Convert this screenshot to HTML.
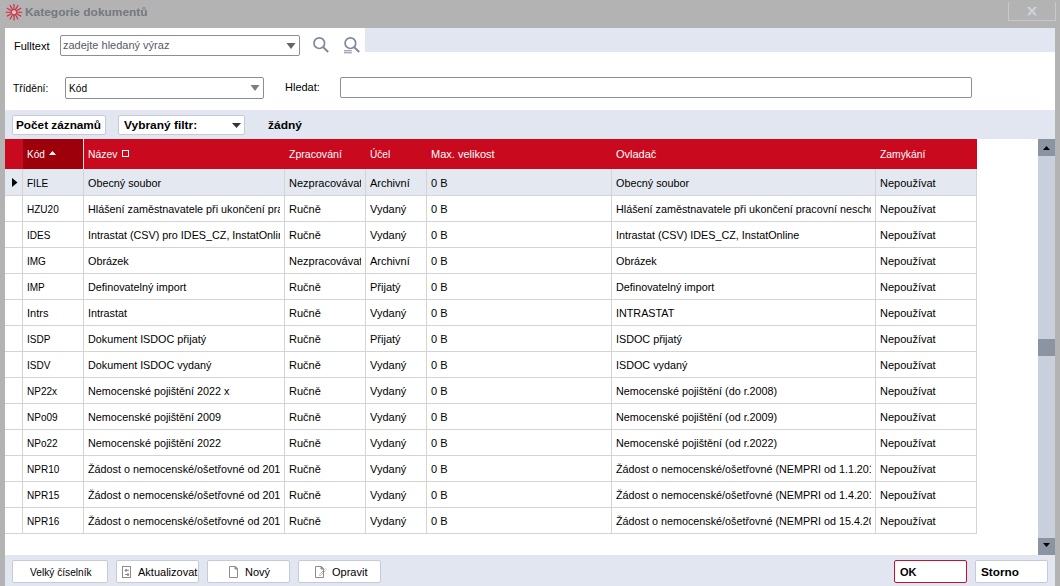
<!DOCTYPE html><html><head><meta charset="utf-8"><style>
*{margin:0;padding:0;box-sizing:border-box}
html,body{width:1060px;height:586px;overflow:hidden;background:#b3b3b3;font-family:"Liberation Sans",sans-serif;font-size:11px;color:#000}
.a{position:absolute}
.t{position:absolute;white-space:nowrap;line-height:13px;font-size:11px}
.b{font-weight:bold}
.inp{position:absolute;background:#fff;border:1px solid #8d8d94;border-radius:2px}
.btn{position:absolute;background:#fff;border:1px solid #c5cbd6;border-radius:2px}
.cell{position:absolute;overflow:hidden;white-space:nowrap;line-height:13px}
.gl{position:absolute;background:#d4d4d4}
</style></head><body>
<svg class="a" style="left:4px;top:2px" width="20" height="20" viewBox="0 0 20 20"><circle cx="10" cy="10.2" r="2.6" fill="#c9cdcc" stroke="#d4283c" stroke-width="0.9"/><line x1="13.00" y1="10.20" x2="17.80" y2="10.20" stroke="#d4283c" stroke-width="1.15" stroke-linecap="round"/><line x1="12.60" y1="11.70" x2="16.75" y2="14.10" stroke="#d4283c" stroke-width="1.15" stroke-linecap="round"/><line x1="11.50" y1="12.80" x2="13.90" y2="16.95" stroke="#d4283c" stroke-width="1.15" stroke-linecap="round"/><line x1="10.00" y1="13.20" x2="10.00" y2="18.00" stroke="#d4283c" stroke-width="1.15" stroke-linecap="round"/><line x1="8.50" y1="12.80" x2="6.10" y2="16.95" stroke="#d4283c" stroke-width="1.15" stroke-linecap="round"/><line x1="7.40" y1="11.70" x2="3.25" y2="14.10" stroke="#d4283c" stroke-width="1.15" stroke-linecap="round"/><line x1="7.00" y1="10.20" x2="2.20" y2="10.20" stroke="#d4283c" stroke-width="1.15" stroke-linecap="round"/><line x1="7.40" y1="8.70" x2="3.25" y2="6.30" stroke="#d4283c" stroke-width="1.15" stroke-linecap="round"/><line x1="8.50" y1="7.60" x2="6.10" y2="3.45" stroke="#d4283c" stroke-width="1.15" stroke-linecap="round"/><line x1="10.00" y1="7.20" x2="10.00" y2="2.40" stroke="#d4283c" stroke-width="1.15" stroke-linecap="round"/><line x1="11.50" y1="7.60" x2="13.90" y2="3.45" stroke="#d4283c" stroke-width="1.15" stroke-linecap="round"/><line x1="12.60" y1="8.70" x2="16.75" y2="6.30" stroke="#d4283c" stroke-width="1.15" stroke-linecap="round"/></svg>
<div class="t b" style="left:25px;top:6px;color:#737881;transform-origin:0 0;transform:scaleX(1.084)">Kategorie dokumentů</div>
<div class="a" style="left:1008px;top:2px;width:48px;height:19px;border:1px solid #c4c9d2;border-top:none"></div>
<svg class="a" style="left:1025px;top:6px" width="14" height="10" viewBox="0 0 14 10"><path d="M1.8 1 H5 L7 3.6 L9 1 H12.2 L8.7 5.1 L12.2 9.2 H9 L7 6.6 L5 9.2 H1.8 L5.3 5.1 Z" fill="#cbd0d9"/></svg>
<div class="a" style="left:5px;top:28px;width:1050px;height:558px;background:#fff"></div>
<div class="a" style="left:365px;top:28px;width:690px;height:24px;background:#e2e6f0"></div>
<div class="t" style="left:14px;top:40px">Fulltext</div>
<div class="inp" style="left:60px;top:35px;width:240px;height:21px"></div>
<div class="t" style="left:63px;top:39px;color:#555a66">zadejte hledaný výraz</div>
<svg class="a" style="left:286px;top:43px" width="10" height="6"><path d="M0.5 0 L9.5 0 L5 6 Z" fill="#646464"/></svg>
<svg class="a" style="left:310px;top:34px" width="22" height="22" viewBox="0 0 22 22"><circle cx="9.3" cy="9.2" r="5.3" fill="none" stroke="#7f8898" stroke-width="1.7"/><path d="M13 13 L18.2 18" stroke="#7f8898" stroke-width="1.9"/></svg>
<svg class="a" style="left:341px;top:34px" width="22" height="22" viewBox="0 0 22 22"><circle cx="9.4" cy="9.2" r="5.3" fill="none" stroke="#7f8898" stroke-width="1.7"/><path d="M13 13 L18.2 18" stroke="#7f8898" stroke-width="1.9"/><path d="M3 16.8 H10.8 M3 18.8 H10.8" stroke="#7f8898" stroke-width="1"/></svg>
<div class="t" style="left:13px;top:82px;transform-origin:0 0;transform:scaleX(0.93)">Třídění:</div>
<div class="inp" style="left:65px;top:77px;width:199px;height:22px"></div>
<div class="t" style="left:69px;top:82px;transform-origin:0 0;transform:scaleX(0.92)">Kód</div>
<svg class="a" style="left:250px;top:85px" width="10" height="6"><path d="M0.5 0 L9.5 0 L5 6 Z" fill="#7c7f85"/></svg>
<div class="t" style="left:285px;top:81px">Hledat:</div>
<div class="inp" style="left:340px;top:77px;width:632px;height:21px"></div>
<div class="a" style="left:5px;top:110px;width:1050px;height:29px;background:#e2e6f0"></div>
<div class="btn" style="left:12px;top:115px;width:94px;height:20px"></div>
<div class="t b" style="left:16px;top:119px;transform-origin:0 0;transform:scaleX(1.07)">Počet záznamů</div>
<div class="btn" style="left:118px;top:115px;width:127px;height:20px"></div>
<div class="t b" style="left:124px;top:119px;transform-origin:0 0;transform:scaleX(1.084)">Vybraný filtr:</div>
<svg class="a" style="left:232px;top:123px" width="9" height="5"><path d="M0 0 L9 0 L4.5 5 Z" fill="#33353a"/></svg>
<div class="t b" style="left:268px;top:119px;transform-origin:0 0;transform:scaleX(1.09)">žádný</div>
<div class="a" style="left:5px;top:139px;width:972px;height:30px;background:#c8091e"></div>
<div class="a" style="left:23px;top:139px;width:60px;height:30px;background:#9d000b"></div>
<div class="a" style="left:83px;top:139px;width:1px;height:30px;background:#f4dfe1"></div>
<div class="t" style="left:27px;top:148px;color:#fff;transform-origin:0 0;transform:scaleX(0.91)">Kód</div>
<div class="t" style="left:88px;top:148px;color:#fff;transform-origin:0 0;transform:scaleX(0.94)">Název</div>
<div class="t" style="left:289px;top:148px;color:#fff;transform-origin:0 0;transform:scaleX(0.96)">Zpracování</div>
<div class="t" style="left:370px;top:148px;color:#fff;transform-origin:0 0;transform:scaleX(0.92)">Účel</div>
<div class="t" style="left:431px;top:148px;color:#fff;transform-origin:0 0;transform:scaleX(1.0)">Max. velikost</div>
<div class="t" style="left:616px;top:148px;color:#fff;transform-origin:0 0;transform:scaleX(1.0)">Ovladač</div>
<div class="t" style="left:880px;top:148px;color:#fff;transform-origin:0 0;transform:scaleX(0.94)">Zamykání</div>
<svg class="a" style="left:49px;top:151px" width="7" height="4"><path d="M0 4 L3.5 0 L7 4 Z" fill="#fff"/></svg>
<div class="a" style="left:122px;top:150px;width:7px;height:7px;border:1.2px solid #fff"></div>
<div class="a" style="left:5px;top:169px;width:971px;height:26px;background:#e4e8f1"></div>
<div class="gl" style="left:5px;top:195px;width:972px;height:1px"></div>
<div class="cell" style="left:27px;top:177px;width:52px"><span style="display:inline-block;transform-origin:0 0;transform:scaleX(0.91)">FILE</span></div>
<div class="cell" style="left:88px;top:177px;width:192px"><span style="display:inline-block;transform-origin:0 0;transform:scaleX(0.98)">Obecný soubor</span></div>
<div class="cell" style="left:289px;top:177px;width:72px">Nezpracovávat</div>
<div class="cell" style="left:370px;top:177px;width:52px">Archivní</div>
<div class="cell" style="left:431px;top:177px;width:176px">0 B</div>
<div class="cell" style="left:616px;top:177px;width:255px"><span style="display:inline-block;transform-origin:0 0;transform:scaleX(0.98)">Obecný soubor</span></div>
<div class="cell" style="left:880px;top:177px;width:92px">Nepoužívat</div>
<div class="gl" style="left:5px;top:221px;width:972px;height:1px"></div>
<div class="cell" style="left:27px;top:203px;width:52px"><span style="display:inline-block;transform-origin:0 0;transform:scaleX(0.91)">HZU20</span></div>
<div class="cell" style="left:88px;top:203px;width:192px"><span style="display:inline-block;transform-origin:0 0;transform:scaleX(0.98)">Hlášení zaměstnavatele při ukončení pracovní neschopnosti</span></div>
<div class="cell" style="left:289px;top:203px;width:72px">Ručně</div>
<div class="cell" style="left:370px;top:203px;width:52px">Vydaný</div>
<div class="cell" style="left:431px;top:203px;width:176px">0 B</div>
<div class="cell" style="left:616px;top:203px;width:255px"><span style="display:inline-block;transform-origin:0 0;transform:scaleX(0.98)">Hlášení zaměstnavatele při ukončení pracovní neschopnosti</span></div>
<div class="cell" style="left:880px;top:203px;width:92px">Nepoužívat</div>
<div class="gl" style="left:5px;top:247px;width:972px;height:1px"></div>
<div class="cell" style="left:27px;top:229px;width:52px"><span style="display:inline-block;transform-origin:0 0;transform:scaleX(0.91)">IDES</span></div>
<div class="cell" style="left:88px;top:229px;width:192px"><span style="display:inline-block;transform-origin:0 0;transform:scaleX(0.98)">Intrastat (CSV) pro IDES_CZ, InstatOnline</span></div>
<div class="cell" style="left:289px;top:229px;width:72px">Ručně</div>
<div class="cell" style="left:370px;top:229px;width:52px">Vydaný</div>
<div class="cell" style="left:431px;top:229px;width:176px">0 B</div>
<div class="cell" style="left:616px;top:229px;width:255px"><span style="display:inline-block;transform-origin:0 0;transform:scaleX(0.98)">Intrastat (CSV) IDES_CZ, InstatOnline</span></div>
<div class="cell" style="left:880px;top:229px;width:92px">Nepoužívat</div>
<div class="gl" style="left:5px;top:273px;width:972px;height:1px"></div>
<div class="cell" style="left:27px;top:255px;width:52px"><span style="display:inline-block;transform-origin:0 0;transform:scaleX(0.91)">IMG</span></div>
<div class="cell" style="left:88px;top:255px;width:192px"><span style="display:inline-block;transform-origin:0 0;transform:scaleX(0.98)">Obrázek</span></div>
<div class="cell" style="left:289px;top:255px;width:72px">Nezpracovávat</div>
<div class="cell" style="left:370px;top:255px;width:52px">Archivní</div>
<div class="cell" style="left:431px;top:255px;width:176px">0 B</div>
<div class="cell" style="left:616px;top:255px;width:255px"><span style="display:inline-block;transform-origin:0 0;transform:scaleX(0.98)">Obrázek</span></div>
<div class="cell" style="left:880px;top:255px;width:92px">Nepoužívat</div>
<div class="gl" style="left:5px;top:299px;width:972px;height:1px"></div>
<div class="cell" style="left:27px;top:281px;width:52px"><span style="display:inline-block;transform-origin:0 0;transform:scaleX(0.91)">IMP</span></div>
<div class="cell" style="left:88px;top:281px;width:192px"><span style="display:inline-block;transform-origin:0 0;transform:scaleX(0.98)">Definovatelný import</span></div>
<div class="cell" style="left:289px;top:281px;width:72px">Ručně</div>
<div class="cell" style="left:370px;top:281px;width:52px">Přijatý</div>
<div class="cell" style="left:431px;top:281px;width:176px">0 B</div>
<div class="cell" style="left:616px;top:281px;width:255px"><span style="display:inline-block;transform-origin:0 0;transform:scaleX(0.98)">Definovatelný import</span></div>
<div class="cell" style="left:880px;top:281px;width:92px">Nepoužívat</div>
<div class="gl" style="left:5px;top:325px;width:972px;height:1px"></div>
<div class="cell" style="left:27px;top:307px;width:52px">Intrs</div>
<div class="cell" style="left:88px;top:307px;width:192px"><span style="display:inline-block;transform-origin:0 0;transform:scaleX(0.98)">Intrastat</span></div>
<div class="cell" style="left:289px;top:307px;width:72px">Ručně</div>
<div class="cell" style="left:370px;top:307px;width:52px">Vydaný</div>
<div class="cell" style="left:431px;top:307px;width:176px">0 B</div>
<div class="cell" style="left:616px;top:307px;width:255px"><span style="display:inline-block;transform-origin:0 0;transform:scaleX(0.98)">INTRASTAT</span></div>
<div class="cell" style="left:880px;top:307px;width:92px">Nepoužívat</div>
<div class="gl" style="left:5px;top:351px;width:972px;height:1px"></div>
<div class="cell" style="left:27px;top:333px;width:52px"><span style="display:inline-block;transform-origin:0 0;transform:scaleX(0.91)">ISDP</span></div>
<div class="cell" style="left:88px;top:333px;width:192px"><span style="display:inline-block;transform-origin:0 0;transform:scaleX(0.98)">Dokument ISDOC přijatý</span></div>
<div class="cell" style="left:289px;top:333px;width:72px">Ručně</div>
<div class="cell" style="left:370px;top:333px;width:52px">Přijatý</div>
<div class="cell" style="left:431px;top:333px;width:176px">0 B</div>
<div class="cell" style="left:616px;top:333px;width:255px"><span style="display:inline-block;transform-origin:0 0;transform:scaleX(0.98)">ISDOC přijatý</span></div>
<div class="cell" style="left:880px;top:333px;width:92px">Nepoužívat</div>
<div class="gl" style="left:5px;top:377px;width:972px;height:1px"></div>
<div class="cell" style="left:27px;top:359px;width:52px"><span style="display:inline-block;transform-origin:0 0;transform:scaleX(0.91)">ISDV</span></div>
<div class="cell" style="left:88px;top:359px;width:192px"><span style="display:inline-block;transform-origin:0 0;transform:scaleX(0.98)">Dokument ISDOC vydaný</span></div>
<div class="cell" style="left:289px;top:359px;width:72px">Ručně</div>
<div class="cell" style="left:370px;top:359px;width:52px">Vydaný</div>
<div class="cell" style="left:431px;top:359px;width:176px">0 B</div>
<div class="cell" style="left:616px;top:359px;width:255px"><span style="display:inline-block;transform-origin:0 0;transform:scaleX(0.98)">ISDOC vydaný</span></div>
<div class="cell" style="left:880px;top:359px;width:92px">Nepoužívat</div>
<div class="gl" style="left:5px;top:403px;width:972px;height:1px"></div>
<div class="cell" style="left:27px;top:385px;width:52px"><span style="display:inline-block;transform-origin:0 0;transform:scaleX(0.91)">NP22x</span></div>
<div class="cell" style="left:88px;top:385px;width:192px"><span style="display:inline-block;transform-origin:0 0;transform:scaleX(0.98)">Nemocenské pojištění 2022 x</span></div>
<div class="cell" style="left:289px;top:385px;width:72px">Ručně</div>
<div class="cell" style="left:370px;top:385px;width:52px">Vydaný</div>
<div class="cell" style="left:431px;top:385px;width:176px">0 B</div>
<div class="cell" style="left:616px;top:385px;width:255px"><span style="display:inline-block;transform-origin:0 0;transform:scaleX(0.98)">Nemocenské pojištění (do r.2008)</span></div>
<div class="cell" style="left:880px;top:385px;width:92px">Nepoužívat</div>
<div class="gl" style="left:5px;top:429px;width:972px;height:1px"></div>
<div class="cell" style="left:27px;top:411px;width:52px"><span style="display:inline-block;transform-origin:0 0;transform:scaleX(0.91)">NPo09</span></div>
<div class="cell" style="left:88px;top:411px;width:192px"><span style="display:inline-block;transform-origin:0 0;transform:scaleX(0.98)">Nemocenské pojištění 2009</span></div>
<div class="cell" style="left:289px;top:411px;width:72px">Ručně</div>
<div class="cell" style="left:370px;top:411px;width:52px">Vydaný</div>
<div class="cell" style="left:431px;top:411px;width:176px">0 B</div>
<div class="cell" style="left:616px;top:411px;width:255px"><span style="display:inline-block;transform-origin:0 0;transform:scaleX(0.98)">Nemocenské pojištění (od r.2009)</span></div>
<div class="cell" style="left:880px;top:411px;width:92px">Nepoužívat</div>
<div class="gl" style="left:5px;top:455px;width:972px;height:1px"></div>
<div class="cell" style="left:27px;top:437px;width:52px"><span style="display:inline-block;transform-origin:0 0;transform:scaleX(0.91)">NPo22</span></div>
<div class="cell" style="left:88px;top:437px;width:192px"><span style="display:inline-block;transform-origin:0 0;transform:scaleX(0.98)">Nemocenské pojištění 2022</span></div>
<div class="cell" style="left:289px;top:437px;width:72px">Ručně</div>
<div class="cell" style="left:370px;top:437px;width:52px">Vydaný</div>
<div class="cell" style="left:431px;top:437px;width:176px">0 B</div>
<div class="cell" style="left:616px;top:437px;width:255px"><span style="display:inline-block;transform-origin:0 0;transform:scaleX(0.98)">Nemocenské pojištění (od r.2022)</span></div>
<div class="cell" style="left:880px;top:437px;width:92px">Nepoužívat</div>
<div class="gl" style="left:5px;top:481px;width:972px;height:1px"></div>
<div class="cell" style="left:27px;top:463px;width:52px"><span style="display:inline-block;transform-origin:0 0;transform:scaleX(0.91)">NPR10</span></div>
<div class="cell" style="left:88px;top:463px;width:192px"><span style="display:inline-block;transform-origin:0 0;transform:scaleX(0.98)">Žádost o nemocenské/ošetřovné od 2010</span></div>
<div class="cell" style="left:289px;top:463px;width:72px">Ručně</div>
<div class="cell" style="left:370px;top:463px;width:52px">Vydaný</div>
<div class="cell" style="left:431px;top:463px;width:176px">0 B</div>
<div class="cell" style="left:616px;top:463px;width:255px"><span style="display:inline-block;transform-origin:0 0;transform:scaleX(0.98)">Žádost o nemocenské/ošetřovné (NEMPRI od 1.1.2010)</span></div>
<div class="cell" style="left:880px;top:463px;width:92px">Nepoužívat</div>
<div class="gl" style="left:5px;top:507px;width:972px;height:1px"></div>
<div class="cell" style="left:27px;top:489px;width:52px"><span style="display:inline-block;transform-origin:0 0;transform:scaleX(0.91)">NPR15</span></div>
<div class="cell" style="left:88px;top:489px;width:192px"><span style="display:inline-block;transform-origin:0 0;transform:scaleX(0.98)">Žádost o nemocenské/ošetřovné od 2015</span></div>
<div class="cell" style="left:289px;top:489px;width:72px">Ručně</div>
<div class="cell" style="left:370px;top:489px;width:52px">Vydaný</div>
<div class="cell" style="left:431px;top:489px;width:176px">0 B</div>
<div class="cell" style="left:616px;top:489px;width:255px"><span style="display:inline-block;transform-origin:0 0;transform:scaleX(0.98)">Žádost o nemocenské/ošetřovné (NEMPRI od 1.4.2015)</span></div>
<div class="cell" style="left:880px;top:489px;width:92px">Nepoužívat</div>
<div class="gl" style="left:5px;top:533px;width:972px;height:1px"></div>
<div class="cell" style="left:27px;top:515px;width:52px"><span style="display:inline-block;transform-origin:0 0;transform:scaleX(0.91)">NPR16</span></div>
<div class="cell" style="left:88px;top:515px;width:192px"><span style="display:inline-block;transform-origin:0 0;transform:scaleX(0.98)">Žádost o nemocenské/ošetřovné od 2016</span></div>
<div class="cell" style="left:289px;top:515px;width:72px">Ručně</div>
<div class="cell" style="left:370px;top:515px;width:52px">Vydaný</div>
<div class="cell" style="left:431px;top:515px;width:176px">0 B</div>
<div class="cell" style="left:616px;top:515px;width:255px"><span style="display:inline-block;transform-origin:0 0;transform:scaleX(0.98)">Žádost o nemocenské/ošetřovné (NEMPRI od 15.4.2016)</span></div>
<div class="cell" style="left:880px;top:515px;width:92px">Nepoužívat</div>
<div class="gl" style="left:22px;top:169px;width:1px;height:365px"></div>
<div class="gl" style="left:83px;top:169px;width:1px;height:365px"></div>
<div class="gl" style="left:284px;top:169px;width:1px;height:365px"></div>
<div class="gl" style="left:365px;top:169px;width:1px;height:365px"></div>
<div class="gl" style="left:426px;top:169px;width:1px;height:365px"></div>
<div class="gl" style="left:611px;top:169px;width:1px;height:365px"></div>
<div class="gl" style="left:875px;top:169px;width:1px;height:365px"></div>
<div class="gl" style="left:976px;top:169px;width:1px;height:365px"></div>
<svg class="a" style="left:12px;top:178px" width="6" height="9"><path d="M0 0 L5.5 4.5 L0 9 Z" fill="#000"/></svg>
<div class="a" style="left:1038px;top:139px;width:17px;height:416px;background:#c9cfdb"></div>
<div class="a" style="left:1038px;top:139px;width:17px;height:17px;background:#8a94a3"></div>
<svg class="a" style="left:1043px;top:146px" width="7" height="4"><path d="M0 4 L3.5 0 L7 4 Z" fill="#000"/></svg>
<div class="a" style="left:1038px;top:339px;width:17px;height:17px;background:#8a94a3"></div>
<div class="a" style="left:1038px;top:538px;width:17px;height:17px;background:#8a94a3"></div>
<svg class="a" style="left:1043px;top:543px" width="7" height="4"><path d="M0 0 L3.5 4 L7 0 Z" fill="#000"/></svg>
<div class="a" style="left:5px;top:555px;width:1050px;height:31px;background:#e2e6f0"></div>
<div class="btn" style="left:12px;top:560px;width:96px;height:23px"></div>
<div class="t" style="left:30px;top:566px;transform-origin:0 0;transform:scaleX(0.925)">Velký číselník</div>
<div class="btn" style="left:116px;top:560px;width:83px;height:23px"></div>
<svg class="a" style="left:122px;top:566px" width="10" height="12"><rect x="0.5" y="0.5" width="8" height="11" fill="none" stroke="#8c8c8c" stroke-width="1"/><path d="M4 4.3 H7 M3 8.5 H6" stroke="#8c8c8c" stroke-width="1"/><ellipse cx="4" cy="4.3" rx="1.1" ry="1.5" fill="#8c8c8c"/><ellipse cx="6" cy="8.5" rx="1.1" ry="1.5" fill="#8c8c8c"/></svg>
<div class="t" style="left:138px;top:566px">Aktualizovat</div>
<div class="btn" style="left:207px;top:560px;width:83px;height:23px"></div>
<svg class="a" style="left:229px;top:566px" width="10" height="12"><path d="M0.5 0.5 H6.5 L8.5 2.5 V11.5 H0.5 Z" fill="#fff" stroke="#8c8c8c" stroke-width="1"/><path d="M6 0.5 V3 H8.5" fill="#8c8c8c" stroke="#8c8c8c" stroke-width="1"/></svg>
<div class="t" style="left:245px;top:566px">Nový</div>
<div class="btn" style="left:298px;top:560px;width:83px;height:23px"></div>
<svg class="a" style="left:315px;top:566px" width="13" height="12"><path d="M0.5 0.5 H6.5 L8.5 2.5 V11.5 H0.5 Z" fill="#fff" stroke="#8c8c8c" stroke-width="1"/><path d="M6 0.5 V3 H8.5" fill="#8c8c8c" stroke="#8c8c8c" stroke-width="1"/><path d="M5.5 9.5 L11.5 3.5 M4.5 8.5 L10.5 2.5 M5 9 L4.8 9.6" stroke="#8c8c8c" stroke-width="0.9" stroke-dasharray="1.2 0.6"/></svg>
<div class="t" style="left:332px;top:566px">Opravit</div>
<div class="btn" style="left:894px;top:560px;width:73px;height:23px;border-color:#c8102e"></div>
<div class="t b" style="left:900px;top:566px">OK</div>
<div class="btn" style="left:975px;top:560px;width:73px;height:23px"></div>
<div class="t b" style="left:981px;top:566px;transform-origin:0 0;transform:scaleX(1.07)">Storno</div>
</body></html>
